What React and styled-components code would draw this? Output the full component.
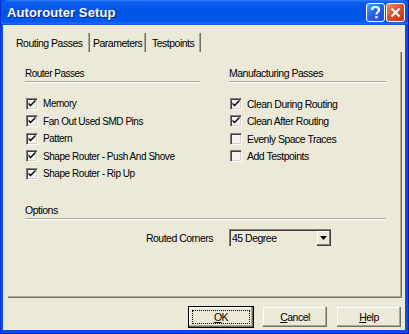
import React from 'react';
import styled, { createGlobalStyle } from 'styled-components';

const GlobalStyle = createGlobalStyle`
  html, body {
    margin: 0;
    padding: 0;
    background: #ffffff;
  }

  body {
    font-family: "Liberation Sans", Arial, sans-serif;
    font-size: 10.5px;
    letter-spacing: -0.5px;
    color: #000000;
  }
`;

const Window = styled.div`
  width: 409px;
  height: 334px;
  box-sizing: border-box;
  display: flex;
  flex-direction: column;
  background: #0050e6;
  border-left: 1px solid #0831d9;
  border-right: 1px solid #001ea0;
  border-bottom: 1px solid #001ea0;
`;

const TitleBar = styled.div`
  height: 25px;
  flex-shrink: 0;
  display: flex;
  align-items: center;
  padding: 0 3px 0 6px;
  background: linear-gradient(
    #2f7bff 0%,
    #0a5df0 10%,
    #0054e3 45%,
    #0058ee 85%,
    #1b6bf5 95%,
    #0049d0 100%
  );
  border-radius: 7px 7px 0 0;
`;

const Title = styled.div`
  flex: 1;
  color: #ffffff;
  font-family: "Liberation Sans", Arial, sans-serif;
  font-weight: bold;
  font-size: 13px;
  letter-spacing: 0.1px;
  text-shadow: 1px 1px 0 #0a1f75;
`;

const CaptionButton = styled.div`
  width: 19px;
  height: 19px;
  box-sizing: border-box;
  margin-left: 1px;
  border: 1px solid #ffffff;
  border-radius: 3px;
  display: flex;
  align-items: center;
  justify-content: center;
  background: ${(p) => (p.$close
    ? 'linear-gradient(135deg, #f0906e 0%, #e0502c 45%, #c2381a 100%)'
    : 'linear-gradient(135deg, #5a9bff 0%, #2467ec 45%, #1550d2 100%)')};
`;

const Body = styled.div`
  flex: 1;
  display: flex;
  flex-direction: column;
  margin: 0 3px 3px 2px;
  padding: 0 3px 0 5px;
  background: #ece9d8;
`;

const TabStrip = styled.div`
  height: 27px;
  flex-shrink: 0;
  display: flex;
  align-items: flex-end;
`;

const Tab = styled.div`
  width: ${(p) => p.$width}px;
  height: 19px;
  box-sizing: border-box;
  display: flex;
  align-items: center;
  padding-left: ${(p) => p.$pad}px;
  border-right: 1px solid #716f64;
  box-shadow: inset -1px 0 0 #aca899;
  margin-right: 1px;
  white-space: nowrap;
`;

const Panel = styled.div`
  flex: 1;
  box-sizing: border-box;
  padding: 15px 15px 0 17px;
  border-right: 1px solid #716f64;
  border-bottom: 1px solid #716f64;
  box-shadow: inset -1px -1px 0 #aca899;
`;

const Columns = styled.div`
  display: grid;
  grid-template-columns: 175px 1fr;
  column-gap: 29px;
`;

const GroupHeader = styled.div`
  height: 14px;
  line-height: 13px;
  border-bottom: 1px solid #aca899;
  box-shadow: 0 1px 0 #ffffff;
  white-space: nowrap;
  font-size: ${(p) => (p.$compact ? '10px' : '10.5px')};
`;

const CheckList = styled.div`
  display: flex;
  flex-direction: column;
  gap: 4.5px;
  padding: 15px 0 0 1px;
  font-size: ${(p) => (p.$compact ? '10px' : '10.5px')};
  letter-spacing: ${(p) => (p.$compact ? '-0.45px' : '-0.5px')};
`;

const CheckRow = styled.label`
  display: flex;
  align-items: center;
  height: 13px;
  white-space: nowrap;
`;

const Box = styled.span`
  width: 12px;
  height: 12px;
  box-sizing: border-box;
  flex-shrink: 0;
  margin-right: 5px;
  border-top: 1px solid #808080;
  border-left: 1px solid #808080;
  border-right: 1px solid #ffffff;
  border-bottom: 1px solid #ffffff;
  box-shadow: inset 1px 1px 0 #404040, inset -1px -1px 0 #d4d0c8;
  background: #f4f3ee;
  display: flex;
  align-items: center;
  justify-content: center;
`;

const OptionsHeader = styled(GroupHeader)`
  margin-top: 24px;
`;

const OptionRow = styled.div`
  display: grid;
  grid-template-columns: 188px 1fr;
  column-gap: 16px;
  margin-top: 10px;
  align-items: center;
`;

const OptionLabel = styled.div`
  text-align: right;
`;

const Select = styled.div`
  width: 102px;
  height: 17px;
  box-sizing: border-box;
  display: flex;
  align-items: center;
  border-top: 1px solid #808080;
  border-left: 1px solid #808080;
  box-shadow: inset 1px 1px 0 #404040;
  background: #ece9d8;
  padding-left: 2px;
`;

const SelectText = styled.span`
  flex: 1;
`;

const SelectButton = styled.span`
  width: 14px;
  height: 15px;
  box-sizing: border-box;
  border-right: 1px solid #404040;
  border-bottom: 1px solid #404040;
  box-shadow: inset -1px -1px 0 #808080, inset 1px 1px 0 #ffffff;
  display: flex;
  align-items: center;
  justify-content: center;
`;

const ButtonRow = styled.div`
  height: 32px;
  flex-shrink: 0;
  display: flex;
  justify-content: flex-end;
  align-items: flex-start;
  gap: 8px;
  padding-top: 8px;
  box-sizing: border-box;
`;

const Button = styled.div`
  width: 66px;
  height: 22px;
  box-sizing: border-box;
  display: flex;
  align-items: center;
  justify-content: center;
  background: #ece9d8;
  border: 1px solid ${(p) => (p.$default ? '#000000' : 'transparent')};
  box-shadow: inset -1px -1px 0 #716f64, inset -2px -2px 0 #aca899,
    inset 1px 1px 0 #ffffff;
  position: relative;

  u {
    text-decoration: underline;
  }
`;

const Focus = styled.span`
  position: absolute;
  inset: 3px;
  border: 1px dotted #000000;
`;

const Check = () => (
  <svg width="8" height="8" viewBox="0 0 8 8">
    <path d="M0.5 2.5 L0.5 4.5 L2.5 6.5 L7.5 1.5 L7.5 -0.5 L2.5 4.5 Z" fill="#000000" />
  </svg>
);

const CheckItem = ({ checked, children }) => (
  <CheckRow>
    <Box>{checked && <Check />}</Box>
    {children}
  </CheckRow>
);

const routerPasses = [
  ['Memory', true],
  ['Fan Out Used SMD Pins', true],
  ['Pattern', true],
  ['Shape Router - Push And Shove', true],
  ['Shape Router - Rip Up', true],
];

const manufacturingPasses = [
  ['Clean During Routing', true],
  ['Clean After Routing', true],
  ['Evenly Space Traces', false],
  ['Add Testpoints', false],
];

export default function App() {
  return (
    <>
      <GlobalStyle />
      <Window>
        <TitleBar>
          <Title>Autorouter Setup</Title>
          <CaptionButton>
            <svg width="11" height="13" viewBox="0 0 11 13">
              <path
                d="M2 4 C2 1.5 3.5 1 5.5 1 C7.5 1 9 2 9 4 C9 6 6.5 6 6.5 8.5"
                stroke="#ffffff"
                strokeWidth="2.2"
                fill="none"
              />
              <rect x="5.3" y="10" width="2.4" height="2.4" fill="#ffffff" />
            </svg>
          </CaptionButton>
          <CaptionButton $close>
            <svg width="11" height="11" viewBox="0 0 11 11">
              <path d="M1.5 1.5 L9.5 9.5 M9.5 1.5 L1.5 9.5" stroke="#ffffff" strokeWidth="2" />
            </svg>
          </CaptionButton>
        </TitleBar>
        <Body>
          <TabStrip>
            <Tab $width={82} $pad={8}>Routing Passes</Tab>
            <Tab $width={55} $pad={2}>Parameters</Tab>
            <Tab $width={54} $pad={5}>Testpoints</Tab>
          </TabStrip>
          <Panel>
            <Columns>
              <div>
                <GroupHeader $compact>Router Passes</GroupHeader>
                <CheckList $compact>
                  {routerPasses.map(([label, checked]) => (
                    <CheckItem key={label} checked={checked}>{label}</CheckItem>
                  ))}
                </CheckList>
              </div>
              <div>
                <GroupHeader>Manufacturing Passes</GroupHeader>
                <CheckList>
                  {manufacturingPasses.map(([label, checked]) => (
                    <CheckItem key={label} checked={checked}>{label}</CheckItem>
                  ))}
                </CheckList>
              </div>
            </Columns>
            <OptionsHeader>Options</OptionsHeader>
            <OptionRow>
              <OptionLabel>Routed Corners</OptionLabel>
              <Select>
                <SelectText>45 Degree</SelectText>
                <SelectButton>
                  <svg width="7" height="4" viewBox="0 0 7 4">
                    <path d="M0 0 H7 L3.5 4 Z" fill="#000000" />
                  </svg>
                </SelectButton>
              </Select>
            </OptionRow>
          </Panel>
          <ButtonRow>
            <Button $default>
              <Focus />
              <span><u>O</u>K</span>
            </Button>
            <Button><span><u>C</u>ancel</span></Button>
            <Button><span><u>H</u>elp</span></Button>
          </ButtonRow>
        </Body>
      </Window>
    </>
  );
}
